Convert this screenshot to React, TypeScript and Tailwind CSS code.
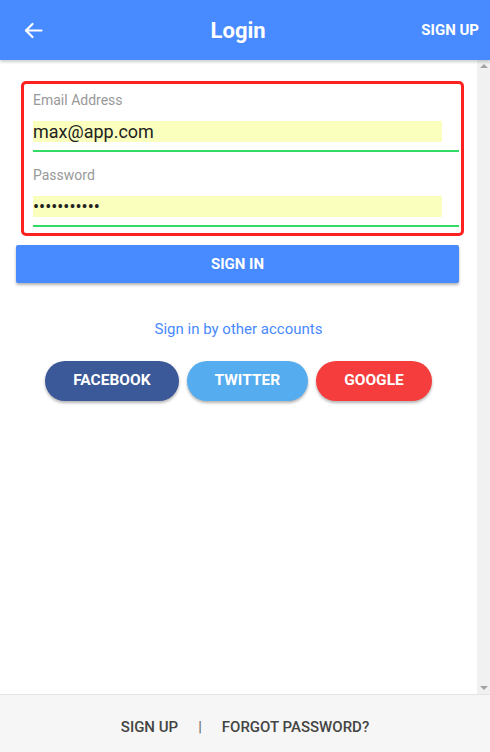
import React from "react";

const Field = ({ label, value, className }: { label: string; value: string; className?: string }) => (
  <div className={className}>
    <label className="block text-sm leading-4 text-[#999]">{label}</label>
    <div className="mt-[13px] w-[409px] h-[21px] bg-[#faffbd] flex items-center text-[18px] leading-none text-[#222]">
      {value}
    </div>
    <div className="mt-2 h-[2px] bg-[#32db64]" />
  </div>
);

const SocialButton = ({ label, color }: { label: string; color: string }) => (
  <button className={`h-10 px-[28px] rounded-full text-white text-[15.5px] font-bold shadow-[0_2px_3px_rgba(0,0,0,0.3)] ${color}`}>
    {label}
  </button>
);

export default function App() {
  return (
    <div className="w-[490px] h-[752px] flex flex-col bg-white font-['Roboto',sans-serif] overflow-hidden">
      <header className="relative z-10 h-[60px] shrink-0 bg-[#488aff] flex items-center px-6 text-white shadow-[0_2px_3px_rgba(0,0,0,0.2)]">
        <svg width="19" height="17" viewBox="0 0 19 17" fill="none" stroke="white" strokeWidth="2.2" strokeLinecap="round" strokeLinejoin="round">
          <path d="M17.5 8.5H2" />
          <path d="M8.5 2L2 8.5L8.5 15" />
        </svg>
        <h1 className="flex-1 text-center text-[22px] font-bold pl-[12px]">Login</h1>
        <span className="text-[15px] font-bold mr-[-13px]">SIGN UP</span>
      </header>

      <div className="flex-1 flex min-h-0">
        <main className="flex-1 pt-[21px]">
          <div className="ml-[21px] w-[443px] border-[3px] border-[#ff2020] rounded-[5px] pl-[9px] pr-[2px] pt-2 pb-[6px]">
            <Field label="Email Address" value="max@app.com" />
            <Field label="Password" value="•••••••••••" className="mt-[15px]" />
          </div>

          <button className="mt-[9px] ml-4 w-[443px] h-[38px] bg-[#488aff] rounded-[2px] text-white text-[15px] font-bold shadow-[0_2px_3px_rgba(0,0,0,0.3)]">
            SIGN IN
          </button>

          <p className="mt-[35px] text-center text-[15px] text-[#488aff]">Sign in by other accounts</p>

          <div className="mt-[20px] flex justify-center gap-2">
            <SocialButton label="FACEBOOK" color="bg-[#3b5998]" />
            <SocialButton label="TWITTER" color="bg-[#55acee]" />
            <SocialButton label="GOOGLE" color="bg-[#f53d3d]" />
          </div>
        </main>

        <div className="w-[13px] bg-[#f1f1f1] flex flex-col justify-between items-center py-[4px]">
          <div className="w-0 h-0 border-x-[4px] border-x-transparent border-b-[4px] border-b-[#a3a3a3]" />
          <div className="w-0 h-0 border-x-[4px] border-x-transparent border-t-[4px] border-t-[#a3a3a3]" />
        </div>
      </div>

      <footer className="h-[58px] shrink-0 bg-[#f6f6f6] border-t border-[#e4e4e4] flex items-center justify-center gap-[20px] pt-[8px] text-[15px] font-medium text-[#444]">
        <span>SIGN UP</span>
        <span className="font-normal text-[#666]">|</span>
        <span>FORGOT PASSWORD?</span>
      </footer>
    </div>
  );
}
